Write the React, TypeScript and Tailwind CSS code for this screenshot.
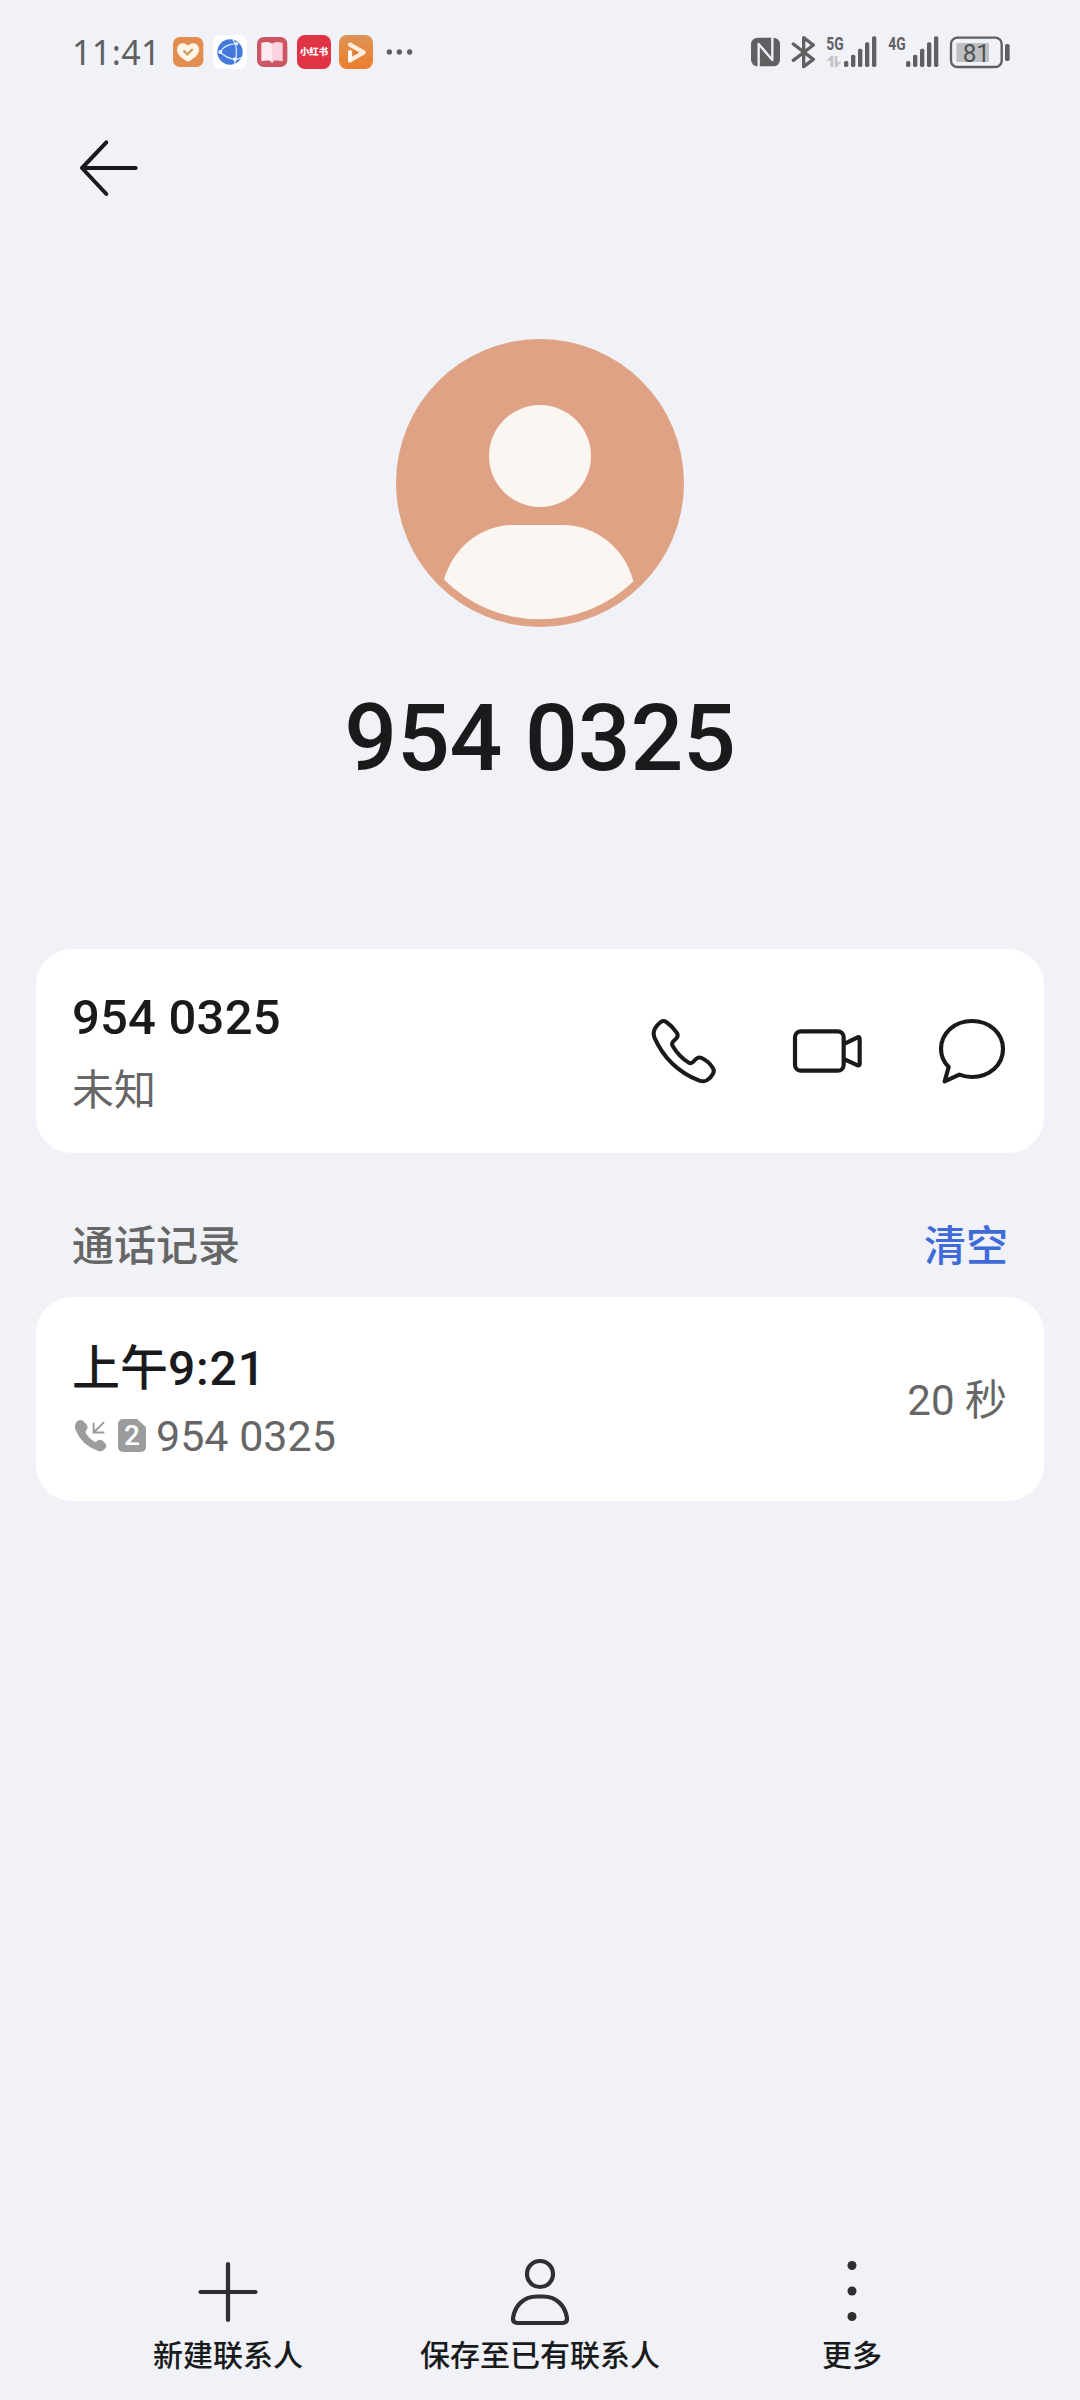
import React from "react";

const BARS = [
  { x: 54, top: 78 },
  { x: 75, top: 59 },
  { x: 96, top: 41 },
  { x: 117, top: 22 },
  { x: 138, top: 4 },
];

const Signal = ({ label, data }: { label: string; data?: boolean }) => (
  <svg viewBox="0 0 153 102" className="h-[34px] w-[51px] overflow-visible" fill="#5f6062">
    <text
      x="1"
      y="46"
      fontSize="55"
      fontWeight="700"
      fontFamily="Roboto, sans-serif"
      textLength="52"
      lengthAdjust="spacingAndGlyphs"
    >
      {label}
    </text>
    {BARS.map((bar) => (
      <rect key={bar.x} x={bar.x} y={bar.top} width="13" height={96 - bar.top} rx="5" />
    ))}
    {data && (
      <g fill="#c3c4c8">
        <path d="M2 77 L16 62 L22 62 V97 H13 V77Z" />
        <path d="M26 63 H34 V80 H46 L33 97 H26Z" />
      </g>
    )}
  </svg>
);

const StatusBar = () => (
  <header className="flex h-[104px] items-center pl-[72px] pr-[69px]">
    <span className="w-[99px] whitespace-nowrap font-['Noto_Sans',sans-serif] text-[34px] leading-[40px] tracking-[0.4px] text-[#5f6062]">
      11:41
    </span>

    {/* Notification icons */}
    <div className="flex items-center gap-2">
      <svg viewBox="0 0 102 102" className="size-[34px]">
        <rect x="6" y="6" width="91" height="90" rx="20" fill="#e38e50" />
        <path
          d="M51 33 C40 18 18 25 18 44 C18 60 37 73 51 80 C65 73 84 60 84 44 C84 25 62 18 51 33Z"
          fill="#fff4e6"
        />
        <path d="M38 47 L49 58 L65 42" fill="none" stroke="#c9a05c" strokeWidth="7" />
      </svg>
      <svg viewBox="0 0 102 102" className="size-[34px]">
        <rect width="102" height="102" rx="24" fill="#fff" />
        <circle cx="51" cy="51" r="38" fill="#4379dc" />
        <g fill="none" stroke="#d5e5fb" strokeWidth="4">
          <path d="M22 51 C28 38 40 28 71 26" />
          <path d="M22 51 C32 62 46 71 66 73" />
          <path d="M60 14 C72 30 75 52 64 88" />
          <path d="M66 73 Q77 73 86 67" />
        </g>
        <circle cx="22" cy="51" r="6" fill="#eef5ff" />
        <circle cx="71" cy="26" r="5" fill="#eef5ff" />
        <circle cx="66" cy="73" r="6" fill="#eef5ff" />
      </svg>
      <svg viewBox="0 0 102 102" className="size-[34px]">
        <rect x="6" y="6" width="91" height="90" rx="20" fill="#cc5664" />
        <path d="M19 24 C32 20 43 20 51 26 V80 C43 75 31 76 19 79Z" fill="#fde9f0" />
        <path d="M83 24 C70 20 59 20 51 26 V80 C59 75 71 76 83 79Z" fill="#f9d3e0" />
        <path d="M46 78 H56 L51 85Z" fill="#f9d3e0" />
      </svg>
      <span className="flex size-[34px] items-center justify-center whitespace-nowrap rounded-[8px] bg-[#e03444] font-['Noto_Sans_CJK_SC',sans-serif] text-[9.4px] font-black leading-none text-white">
        小红书
      </span>
      <svg viewBox="0 0 102 102" className="size-[34px]">
        <defs>
          <linearGradient id="play" x1="0" y1="0" x2="0" y2="1">
            <stop offset="0" stopColor="#dd9353" />
            <stop offset="1" stopColor="#ee7d2e" />
          </linearGradient>
        </defs>
        <rect width="102" height="102" rx="24" fill="url(#play)" />
        <path d="M33 29 L74 52 L33 76" fill="none" stroke="#ffeedd" strokeWidth="13" strokeLinecap="round" strokeLinejoin="round" />
        <path d="M33 76 V51" stroke="#fff8f0" strokeWidth="12" strokeLinecap="round" />
        <path d="M43 47 L58 54 L45 61Z" fill="#d9783a" />
      </svg>
      <svg viewBox="0 0 84 102" className="ml-[5px] h-[34px] w-7" fill="#5f6062">
        <circle cx="10" cy="51" r="8" />
        <circle cx="40" cy="51" r="8" />
        <circle cx="71" cy="51" r="8" />
      </svg>
    </div>

    {/* System icons */}
    <div className="ml-auto flex items-center gap-[10.5px]">
      <svg viewBox="0 0 87 102" className="h-[34px] w-[29px]">
        <rect x="0" y="8" width="87" height="86" rx="20" fill="#5f6062" />
        <path d="M23 95 V27 L64 75 V7" fill="none" stroke="#f1f2f7" strokeWidth="7" strokeLinejoin="round" />
      </svg>
      <svg viewBox="0 0 75 102" className="h-[34px] w-[25px]">
        <path
          d="M7 27 L67 73 L38 95 V8 L67 30 L7 76"
          fill="none"
          stroke="#5f6062"
          strokeWidth="10"
          strokeLinejoin="round"
          strokeLinecap="round"
        />
      </svg>
      <Signal label="5G" data />
      <Signal label="4G" />
      <svg viewBox="0 0 186 102" className="h-[34px] w-[62px]">
        <rect x="6" y="8" width="152" height="88" rx="19" fill="none" stroke="#5f6062" strokeWidth="7" />
        <rect x="22" y="24" width="98" height="57" rx="4" fill="#bfc0c3" />
        <rect x="168" y="27" width="14" height="51" rx="5" fill="#5f6062" />
        <text x="41" y="80" fontSize="77" fontFamily="Roboto, sans-serif" textLength="82" lengthAdjust="spacingAndGlyphs" fill="#505153">
          81
        </text>
      </svg>
    </div>
  </header>
);

const Avatar = () => (
  <svg viewBox="0 0 288 288" className="size-72">
    <circle cx="144" cy="144" r="144" fill="#dfa284" />
    <circle cx="144" cy="117" r="51" fill="#fbf6f2" />
    <path
      d="M48 240.5 C58 207 86 186 118 186 H166 C200 186 229 209 237.3 242.5 A135 135 0 0 1 48 240.5Z"
      fill="#fbf6f2"
    />
  </svg>
);

const NumberCard = () => (
  <section className="flex h-[204px] items-center rounded-[36px] bg-white pl-9 pr-[38px]">
    <div className="flex flex-col pt-1.5">
      <span className="text-[49px] font-medium leading-[68px] tracking-[0.2px] text-[#191a1b]">954 0325</span>
      <span className="mt-[5px] text-[42px] leading-[68px] text-[#666]">未知</span>
    </div>
    <div className="ml-auto flex items-center gap-[74px]">
      <svg viewBox="90 260 204 204" className="size-[68px]" fill="none" stroke="#191a1b" strokeWidth="12" strokeLinejoin="round">
        <path d="M122 275 Q130 269 139 275 Q158 288 171 308 Q176 317 169 324 L159 334 Q154 340 158 347 Q176 378 206 397 Q212 401 218 396 L229 385 Q236 379 245 383 Q266 393 278 412 Q284 421 279 430 Q273 441 262 449 Q252 456 238 451 Q144 414 103 321 Q98 307 105 294 Q112 283 122 275Z" />
      </svg>
      <svg viewBox="518 260 216 204" className="h-[68px] w-[72px]" fill="none" stroke="#191a1b" strokeWidth="12.5" strokeLinejoin="round">
        <rect x="527" y="303" width="146" height="118" rx="18" />
        <path d="M676 340 L715 321 Q721 319 721 326 V400 Q721 407 715 405 L676 387" />
      </svg>
      <svg viewBox="954 260 204 204" className="size-[68px]" fill="none" stroke="#191a1b" strokeWidth="12.5" strokeLinejoin="round">
        <path d="M986 410 C970 394 963 376 963 356 C963 308 1004 272 1056 272 C1108 272 1149 308 1149 356 C1149 404 1108 440 1056 440 Q1036 440 1018 433 L974 453 Z" />
      </svg>
    </div>
  </section>
);

const CallRecord = () => (
  <section className="flex h-[204px] items-center rounded-[36px] bg-white pl-9 pr-[37px]">
    <div className="flex flex-col pt-[5px]">
      <span className="text-[48px] font-medium leading-[68px] text-[#191a1b]">
        上午<span className="tracking-[0.8px]">9:21</span>
      </span>
      <div className="flex h-[66px] items-center">
        <svg viewBox="158 650 102 104" className="ml-px h-[35px] w-[34px]">
          <path
            d="M174 657 Q181 653 188 658 L199 670 Q205 679 198 686 Q194 690 197 696 Q206 711 221 720 Q227 723 231 718 Q237 712 245 716 L256 727 Q261 735 254 742 Q245 753 232 748 Q184 731 165 684 Q160 667 174 657Z"
            fill="#9b9c9d"
          />
          <path d="M251 662 L220 693 M220 664 V693 H252" fill="none" stroke="#9b9c9d" strokeWidth="6" />
        </svg>
        <span className="ml-[11px] flex h-[33px] w-7 items-center justify-center rounded-[5px] bg-[#9b9c9d] text-[28px] font-medium leading-none text-white [clip-path:polygon(0_0,68%_0,100%_25%,100%_100%,0_100%)]">
          2
        </span>
        <span className="ml-2.5 text-[43px] leading-[66px] text-[#666]">954 0325</span>
      </div>
    </div>
    <span className="ml-auto pt-[3px] text-[42px] leading-[68px] text-[#666]">20 秒</span>
  </section>
);

const BottomBar = () => (
  <nav className="mt-auto grid grid-cols-3 px-[72px] pb-6 text-[30px] font-medium leading-10 text-[#191a1b]">
    <button className="flex flex-col items-center gap-2">
      <svg viewBox="0 0 72 72" className="size-[72px]" stroke="#2e2f30" strokeWidth="4.2" strokeLinecap="round">
        <path d="M36 8 V64 M8.5 36 H63.5" />
      </svg>
      新建联系人
    </button>
    <button className="flex flex-col items-center gap-2">
      <svg viewBox="0 0 72 72" className="size-[72px]" fill="none" stroke="#2e2f30" strokeWidth="4.2" strokeLinejoin="round">
        <circle cx="36" cy="18" r="13" />
        <path d="M33 40.5 H39 C52 40.5 61 49 63 62 Q63.4 66.5 59 67 H13 Q8.6 66.5 9 62 C11 49 20 40.5 33 40.5Z" />
      </svg>
      保存至已有联系人
    </button>
    <button className="flex flex-col items-center gap-2">
      <svg viewBox="0 0 72 72" className="size-[72px]" fill="#2e2f30">
        <circle cx="36" cy="9.5" r="4.5" />
        <circle cx="36" cy="35" r="4.5" />
        <circle cx="36" cy="60.5" r="4.5" />
      </svg>
      更多
    </button>
  </nav>
);

export default function App() {
  return (
    <div className="flex h-[2400px] w-[1080px] flex-col overflow-hidden bg-[#f1f2f7] font-[Roboto,'Noto_Sans_CJK_SC',sans-serif]">
      <StatusBar />
      <div className="flex h-32 items-center pl-[78px]">
        <svg viewBox="55 53 180 180" className="size-[60px]" fill="none" stroke="#191a1b" strokeWidth="12" strokeLinecap="round" strokeLinejoin="round">
          <path d="M140 66 L67 143 L140 221 M67 143 H228" />
        </svg>
      </div>

      {/* Contact header */}
      <div className="flex flex-col items-center pt-[107px]">
        <Avatar />
        <h1 className="mt-[52px] text-[93px] font-medium leading-[120px] tracking-[-0.2px] text-[#191a1b]">954 0325</h1>
      </div>

      <main className="mt-[150px] flex flex-col px-9">
        <NumberCard />
        <div className="mt-[53px] flex h-20 items-center justify-between px-9 text-[42px] font-medium">
          <h2 className="text-[#666]">通话记录</h2>
          <button className="text-[#3f6bd8]">清空</button>
        </div>
        <div className="mt-[11px]">
          <CallRecord />
        </div>
      </main>

      <BottomBar />
    </div>
  );
}
